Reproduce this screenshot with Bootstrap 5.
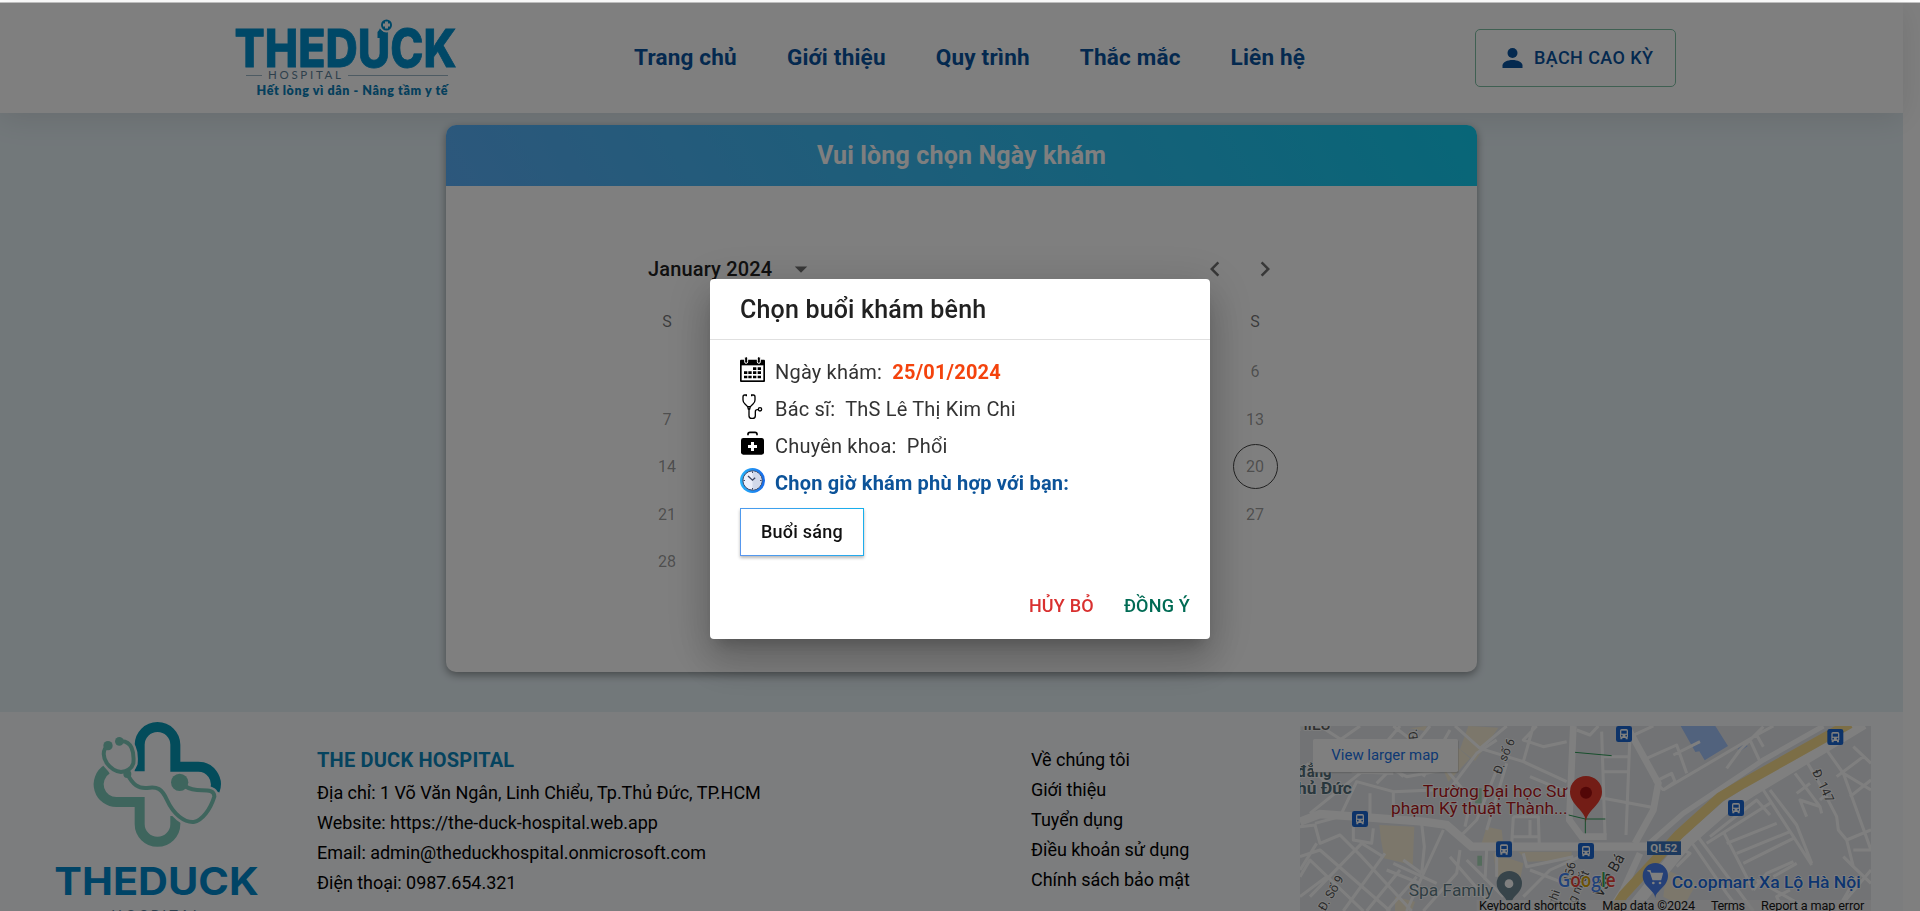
<!DOCTYPE html>
<html lang="vi">
<head>
<meta charset="utf-8">
<meta name="viewport" content="width=device-width, initial-scale=1">
<title>The Duck Hospital</title>
<link rel="stylesheet" href="https://cdn.jsdelivr.net/npm/bootstrap@5.3.0/dist/css/bootstrap.min.css">
<style>
  html, body { height: 911px; overflow: hidden; }
  body { font-family: Roboto, "Liberation Sans", sans-serif; background: #fff; color: #212121; }
  .top-edge { height: 3px; border-bottom: 1px solid #c4c4c4; }
  .page { width: 1903px; height: 908px; }
  .site-header { height: 110px; padding: 0 227px 0 235px; background: #fff; box-shadow: 0 5px 30px rgba(0,0,0,.1); position: relative; }
  .site-nav { margin-left: 174px; gap: 50px; padding-bottom: 1px; }
  .site-nav a { font-size: 22.5px; font-weight: 700; letter-spacing: .2px; color: #08529e; text-decoration: none; white-space: nowrap; }
  .user-btn { width: 201px; height: 58px; border: 1px solid #7fc0a5; border-radius: 5px; color: #08529e; font-size: 18px; font-weight: 500; letter-spacing: .4px; padding: 0 0 1px 23px; }
  .content { height: 599px; background: #e5f0f5; padding: 12px 0 0 446px; }
  .booking { position: relative; width: 1031px; height: 547px; border: 0; border-radius: 10px; box-shadow: 0 3px 8px rgba(0,0,0,.4); overflow: hidden; }
  .booking-head { height: 61px; font-size: 25px; font-weight: 700; letter-spacing: .15px; color: #fff; line-height: 61px; background: linear-gradient(60deg, #5aaff8, #10cdf0); }
  .cal { margin: 62px 172px 0; width: 687px; }
  .cal-bar { height: 42px; padding: 0 25px 0 30px; font-size: 20px; font-weight: 500; letter-spacing: .15px; }
  .cal-grid { display: grid; grid-template-columns: repeat(7, 98px); font-size: 16px; text-align: center; color: rgba(0,0,0,.4); letter-spacing: -.1px; }
  .cal-grid .dow { height: 58px; padding-top: 20px; color: rgba(0,0,0,.55); }
  .cal-grid .day { height: 47.5px; line-height: 47px; }
  .today { display: inline-block; width: 45px; height: 45px; line-height: 43px; border: 1px solid #444; border-radius: 50%; }
  .site-footer { height: 199px; background: #f8fafd; display: grid; grid-template-columns: 317px 714px 269px 571px; }
  .foot-text { font-size: 18px; line-height: 30px; color: #000; padding-top: 33px; white-space: nowrap; letter-spacing: -.03px; }
  .foot-text h2 { font-size: 20px; font-weight: 700; line-height: 30px; color: #0b87bd; margin: 0 0 3px; letter-spacing: .2px; }
  .modal-backdrop { top: 3px; height: 908px; }
  .slot-modal .modal-dialog { width: 500px; max-width: 500px; margin: 279px 0 0 710px; transform: none; }
  .slot-modal .modal-content { height: 360px; border: 0; border-radius: 4px; color: #333; box-shadow: 0 11px 15px -7px rgba(0,0,0,.2), 0 24px 38px 3px rgba(0,0,0,.14), 0 9px 46px 8px rgba(0,0,0,.12); }
  .slot-modal .modal-header { height: 61px; padding: 1px 30px 0; border-bottom: 1px solid #e0e0e0; }
  .slot-modal .modal-title { font-size: 25px; font-weight: 500; color: #212121; letter-spacing: .18px; }
  .slot-modal .modal-body { padding: 14px 30px 0; }
  .info { height: 37px; line-height: 37px; font-size: 20px; letter-spacing: .19px; white-space: nowrap; }
  .info svg { margin: 3px 10px 0 0; flex: none; }
  .date { color: #f4430d; font-weight: 700; letter-spacing: .2px; }
  .pick { color: #0c5399; font-weight: 700; letter-spacing: .19px; }
  .slot-btn { width: 124px; height: 48px; margin-top: 6px; padding: 0 0 2px; border: 1px solid; border-image: linear-gradient(60deg, #5a96ee, #14b0ec) 1; border-radius: 0; font-size: 18px; font-weight: 500; letter-spacing: .25px; color: #111; background: #fff; box-shadow: 0 2px 3px rgba(0,0,0,.28); }
  .slot-modal .modal-footer { border: 0; padding: 0 20px 15px; gap: 30px; }
  .text-action { font-size: 18px; font-weight: 500; letter-spacing: .2px; line-height: 36px; margin: 0; padding: 0; border: 0; background: none; }
</style>
</head>
<body>
<div class="top-edge"></div>
<div class="page">
  <header class="site-header d-flex align-items-center">
    <svg width="225" height="90" viewBox="235 13 225 90" aria-label="The Duck Hospital">
      <g fill="#0090cf" stroke="#0090cf">
        <text x="234.500" y="67" font-family="Inter" font-weight="800" font-size="52" textLength="222" lengthAdjust="spacingAndGlyphs" stroke-width=".8">THEDUCK</text>
        <circle cx="386.500" cy="25" r="7.500" fill="#fff" stroke="none"/>
        <circle cx="386.500" cy="25" r="5.500" stroke="none"/>
        <path d="M386.500 21.500v7M383 25h7" stroke="#fff" stroke-width="3"/>
        <path d="M377.500 32l2.500-3 4.500 4v5h-7z" stroke="none"/>
      </g>
      <path d="M246 75.500h16M348 75.500h100" stroke="#9db6c6" stroke-width="1"/>
      <text x="268" y="79.300" font-family="Lato" font-size="11.500" fill="#5d8199" textLength="73">HOSPITAL</text>
      <text x="256.500" y="95" font-family="Lato" font-weight="800" font-size="12.500" fill="#0a7fb8" textLength="191">Hết lòng vì dân - Nâng tầm y tế</text>
    </svg>
    <nav class="site-nav d-flex">
      <a href="#">Trang chủ</a><a href="#">Giới thiệu</a><a href="#">Quy trình</a><a href="#">Thắc mắc</a><a href="#">Liên hệ</a>
    </nav>
    <button class="user-btn btn d-flex align-items-center ms-auto" type="button">
      <svg width="27" height="30" viewBox="0 0 27 30" fill="#08529e"><circle cx="13.500" cy="10" r="5"/><path d="M3.500 25v-2.500c0-3.300 5-5.500 10-5.500s10 2.200 10 5.500V25z"/></svg>
      <span class="ms-2 text-nowrap">BẠCH CAO KỲ</span>
    </button>
  </header>

  <main class="content">
    <section class="booking card">
      <div class="booking-head text-center">Vui lòng chọn Ngày khám</div>
      <div class="cal">
        <div class="cal-bar d-flex align-items-center">
          <span>January 2024</span>
          <svg width="30" height="30" viewBox="0 0 24 24" fill="#707070" style="margin-left:14px"><path d="M7 10l5 5 5-5z"/></svg>
          <svg class="ms-auto" width="30" height="30" viewBox="0 0 24 24" fill="#707070"><path d="M15.410 7.410L14 6l-6 6 6 6 1.410-1.410L10.830 12z"/></svg>
          <svg width="30" height="30" viewBox="0 0 24 24" fill="#707070" style="margin-left:20px"><path d="M10 6L8.590 7.410 13.170 12l-4.580 4.590L10 18l6-6z"/></svg>
        </div>
        <div class="cal-grid">
          <div class="dow">S</div><div></div><div></div><div></div><div></div><div></div><div class="dow">S</div>
          <div class="day"></div><div></div><div></div><div></div><div></div><div></div><div class="day">6</div>
          <div class="day">7</div><div></div><div></div><div></div><div></div><div></div><div class="day">13</div>
          <div class="day">14</div><div></div><div></div><div></div><div></div><div></div><div class="day"><span class="today">20</span></div>
          <div class="day">21</div><div></div><div></div><div></div><div></div><div></div><div class="day">27</div>
          <div class="day">28</div>
        </div>
      </div>
    </section>
  </main>

  <footer class="site-footer">
    <div class="ps-5">
      <svg width="210" height="199" viewBox="143 66 630 597" fill="none">
        <g stroke-width="30">
          <path d="M418 244V164.500a53.500 53.500 0 0 1 107 0V230H592a53 53 0 0 1 51 72" stroke="#0699b6"/>
          <path d="M320 238A53 53 0 0 0 350 336H418V402a53.500 53.500 0 0 0 107 0V378" stroke="#7dcabb"/>
        </g>
        <path d="M323 167C304 180 309 205 320 220Q337 243 362 246Q392 242 399 220C402 190 396 148 357 154M380 250C398 286 415 296 440 294C470 288 485 296 500 330C520 374 553 398 580 396C606 392 630 358 642 320C643 296 612 302 590 300S555 292 538 278" stroke="#f8fafd" stroke-width="26"/>
        <path d="M323 167C304 180 309 205 320 220Q337 243 362 246Q392 242 399 220C402 190 396 148 357 154M380 250C398 286 415 296 440 294C470 288 485 296 500 330C520 374 553 398 580 396C606 392 630 358 642 320C643 296 612 302 590 300S555 292 538 278" stroke="#7dcabb" stroke-width="12"/>
        <g fill="#7dcabb"><circle cx="323" cy="167" r="14"/><circle cx="357" cy="154" r="13"/><circle cx="381" cy="252" r="12"/><circle cx="538" cy="277" r="26"/></g>
        <text x="162" y="615" font-family="Inter" font-weight="700" font-size="113" fill="#0088cc" textLength="613" lengthAdjust="spacingAndGlyphs">THEDUCK</text>
        <text x="333" y="690" font-family="Lato" font-size="42" fill="#5d8199" textLength="266">HOSPITAL</text>
      </svg>
    </div>
    <div class="foot-text">
      <h2>THE DUCK HOSPITAL</h2>
      <div>Địa chỉ: 1 Võ Văn Ngân, Linh Chiểu, Tp.Thủ Đức, TP.HCM</div>
      <div>Website: https://the-duck-hospital.web.app</div>
      <div>Email: admin@theduckhospital.onmicrosoft.com</div>
      <div>Điện thoại: 0987.654.321</div>
    </div>
    <div class="foot-text">
      <div>Về chúng tôi</div><div>Giới thiệu</div><div>Tuyển dụng</div><div>Điều khoản sử dụng</div><div>Chính sách bảo mật</div>
    </div>
    <div style="padding-top:14px">
      <svg class="d-block" width="571" height="185" viewBox="30 48 1713 555" font-family="Roboto">
        <defs>
          <g id="bus"><rect width="48" height="48" rx="7" fill="#1a67d2"/><rect x="12" y="9" width="24" height="27" rx="5" fill="#fff"/><rect x="16" y="14" width="16" height="9" fill="#1a67d2"/><circle cx="17.500" cy="29" r="2.500" fill="#1a67d2"/><circle cx="30.500" cy="29" r="2.500" fill="#1a67d2"/><path d="M13 34h6v6h-6zM29 34h6v6h-6z" fill="#fff"/></g>
        </defs>
        <rect x="30" y="48" width="1713" height="555" fill="#e5e7ea"/>
        <!-- built-up areas -->
        <g fill="#f8efd6">
          <path d="M268 345l105 5-5 115-85-20-10-55zM590 350l45 10 5 45-65-5zM535 48l90 5-70 100-45-35zM440 130l60-20 40 35-65 70zM685 425h160v25l-130 5zM610 430l90 30-10 50-70-10zM360 55l50-7-5 15zM315 560l60 15-10 28h-50zM1130 480l90 40-40 70-60-30z"/>
        </g>
        <path d="M1172 48h104l38 60-70 43-16-27-12 2zM1343 117l22-17 8 8-24 17z" fill="#a3c4fb"/>
        <path d="M560 235h15v45h-20zM562 437h14v30h-14z" fill="#a9d8b8"/>
        <!-- side streets -->
        <g fill="none" stroke="#fff" stroke-width="9" stroke-linejoin="round">
          <path d="M30 200L150 90 210 48M60 310L210 190 330 48M130 240L50 160M150 320L200 215 310 245 430 240M250 150L350 200 460 180M90 48L170 100 250 110M310 48L390 110 470 180 520 240M420 48L370 110 260 220M260 130l80 70M480 60L400 200M470 250L560 130 620 90M240 250V320M310 245V325M185 185L310 190"/>
          <path d="M495 48L570 115 700 155 830 215M570 115L650 48M700 155L730 48M620 180L560 330 510 380M650 160L590 360M740 48L700 90 760 110 830 95M720 200L840 250M670 320L665 405M670 320H745L748 410M670 380H745M720 330V380M545 260L525 350"/>
          <path d="M395 340L403 410 395 490M460 360L405 480 350 603M310 460L440 520M290 480L390 520M395 490L340 450M190 345L190 390 245 400 250 355"/>
          <path d="M30 350L75 345 90 400 150 375 215 440 365 603M30 440L90 420 300 603M30 500L60 450 220 603M80 400L30 480M60 560L215 400 280 440M160 603L285 430M230 603L330 480M290 603L380 500M30 560L110 500M75 340L150 320M400 603L500 490 510 420M480 440L620 603M530 450L640 560M590 420L585 510M620 425V500M700 430L710 470 850 440M720 480L850 530M700 560L780 480 870 440"/>
          <path d="M935 65L945 375M1020 75L1008 375M860 250L1085 292M935 140H1015M940 185H1012M925 48L900 75 860 60"/>
          <path d="M1070 145L1160 105 1190 190M1120 240L1095 215 1145 190 1155 215 1120 240M1120 240L1400 75 1450 48M1010 85L1090 48M1230 95L1150 135M1310 175L1350 120 1420 50M1380 90L1410 155M1400 75L1420 110"/>
          <path d="M1420 240L1565 465M1440 240L1520 345 1565 460M1250 400L1440 280M1260 380L1400 270 1440 315M1300 365L1390 540M1310 400L1460 340M1340 430L1500 365M1360 460L1510 385M1200 390L1310 550 1350 603M1220 375L1390 603M1140 400L1200 430 1160 470M1390 540L1430 490 1510 455M1400 510L1560 600M1450 500L1520 460"/>
          <path d="M1515 190L1590 290 1595 310M1550 155L1580 205 1640 320 1645 360 1670 390 1690 470 1743 520M1610 120L1660 190 1743 420M1640 200L1720 140M1520 250L1560 220M1590 290L1530 270 1550 320M1670 390L1743 360M1680 260L1743 210M1660 190L1743 240M1690 470L1660 440M1690 420L1743 420M1620 240L1590 270M1690 110L1743 160M1480 603L1460 560 1500 540M1700 500L1640 603M1743 480L1650 590"/>
        </g>
        <g fill="none" stroke="#fff">
          <path d="M30 335L90 312 230 322 400 335 470 345 545 410H1100" stroke-width="25"/>
          <path d="M850 48L838 330 875 380H950M1010 48L1105 220 1090 300 1035 400M960 603L1000 540 1050 430" stroke-width="20"/>
          <path d="M1060 415L1180 310 1420 150 1600 48" stroke-width="15"/>
          <path d="M1720 40L1380 245 1310 290 1190 395 1020 603" stroke-width="36"/>
          <path d="M1680 40L1360 220 1290 262 1165 375 1000 555 965 610" stroke="#f8dc8d" stroke-width="30"/>
        </g>
        <path d="M855 127L965 137M836 315l50 12h60M886 325v45" stroke="#2e9c58" stroke-width="3" fill="none"/>
        <!-- places and transit -->
        <use href="#bus" x="186" y="303"/><use href="#bus" x="618" y="394"/><use href="#bus" x="864" y="399"/><use href="#bus" x="978" y="48"/><use href="#bus" x="1612" y="57"/><use href="#bus" x="1314" y="270"/>
        <path d="M888 338c0-38-48-52-48-93a48 47 0 0 1 96 0c0 41-48 55-48 93z" fill="#e63a2d"/><circle cx="888" cy="248" r="18" fill="#a50e0e"/>
        <path d="M620 520a38 37 0 0 1 76 0c0 25-20 33-30 52h-16c-10-19-30-27-30-52z" fill="#6f8995"/><circle cx="657" cy="521" r="13" fill="#fff"/>
        <path d="M1096 565c0-24-38-34-38-68a38 38 0 0 1 76 0c0 34-38 44-38 68z" fill="#4a80ee"/>
        <path d="M1072 482h8l9 27h23l5-19h-33" fill="#fff" stroke="#fff" stroke-width="4"/><circle cx="1090" cy="519" r="4" fill="#fff"/><circle cx="1110" cy="519" r="4" fill="#fff"/>
        <rect x="1071" y="394" width="102" height="41" fill="#3973bd"/>
        <text x="1081" y="427" font-size="34" font-weight="700" fill="#fff" textLength="81">QL52</text>
        <g paint-order="stroke" stroke="#fff" stroke-width="5" stroke-linejoin="round">
          <g fill="#b3171b" font-size="51"><text x="398" y="260" textLength="434" lengthAdjust="spacingAndGlyphs">Trường Đại học Sư</text><text x="303" y="312" textLength="530" lengthAdjust="spacingAndGlyphs">phạm Kỹ thuật Thành...</text></g>
          <g fill="#536f7a" font-size="49" font-weight="700"><text x="22" y="200" textLength="103" lengthAdjust="spacingAndGlyphs">đẳng</text><text x="21" y="253" textLength="164" lengthAdjust="spacingAndGlyphs">hủ Đức</text></g>
          <text x="20" y="61" font-size="42" font-weight="500" fill="#606060" textLength="102" lengthAdjust="spacingAndGlyphs">HIẾU</text>
          <text x="356" y="557" font-size="50" fill="#617c87" textLength="254" lengthAdjust="spacingAndGlyphs">Spa Family</text>
          <text x="1145" y="533" font-size="50" font-weight="500" fill="#1a6be0" textLength="567" lengthAdjust="spacingAndGlyphs">Co.opmart Xa Lộ Hà Nội</text>
          <g fill="#555" font-size="37">
            <text transform="translate(632 195) rotate(-67)" textLength="112">Đ. số 6</text>
            <text transform="translate(383 88) rotate(-95)">Đ. </text>
            <text transform="translate(105 605) rotate(-60)">Đ. Số 9</text>
            <text transform="translate(1566 185) rotate(65)">Đ. 147</text>
            <text transform="translate(794 592) rotate(-70)">ghi</text>
            <text transform="translate(845 520) rotate(-78)">156</text>
            <text transform="translate(846 600) rotate(-65)">ng nhất</text>
            <text transform="translate(935 565) rotate(-60)" font-size="45" fill="#444">Văn Bá</text>
          </g>
        </g>
        <rect x="560" y="570" width="1183" height="35" fill="#f3f3f3" opacity=".72"/>
        <text x="803" y="532" font-family="Open Sans" font-size="57" font-weight="600" stroke="#fff" stroke-width="4" paint-order="stroke" textLength="174" lengthAdjust="spacingAndGlyphs"><tspan fill="#4285f4">G</tspan><tspan fill="#ea4335">o</tspan><tspan fill="#d9a404">o</tspan><tspan fill="#4285f4">g</tspan><tspan fill="#34a853">l</tspan><tspan fill="#ea4335">e</tspan></text>
        <g font-size="38" fill="#161616"><text x="567" y="600" textLength="322">Keyboard shortcuts</text><text x="937" y="600" textLength="278">Map data ©2024</text><text x="1263" y="600" textLength="102">Terms</text><text x="1413" y="600" textLength="310">Report a map error</text></g>
        <rect x="70" y="90" width="436" height="100" rx="5" fill="#aaa" opacity=".5"/>
        <rect x="69" y="87" width="435" height="99" rx="5" fill="#fff"/>
        <text x="124" y="150" font-size="45" fill="#1a73e8" textLength="322" lengthAdjust="spacingAndGlyphs">View larger map</text>
      </svg>
    </div>
  </footer>
</div>

<div class="modal-backdrop show"></div>
<div class="modal slot-modal show d-block" tabindex="-1" role="dialog">
  <div class="modal-dialog">
    <div class="modal-content">
      <div class="modal-header"><h1 class="modal-title">Chọn buổi khám bênh</h1></div>
      <div class="modal-body">
        <div class="info d-flex align-items-start">
          <svg width="25" height="25" viewBox="0 0 75 75"><path d="M3 8h69q3 0 3 3v61q0 3-3 3H3q-3 0-3-3V11q0-3 3-3z"/><path d="M5 25h65v45H5z" fill="#fff"/><g stroke="#fff" stroke-width="3"><rect x="14" y="-1" width="9" height="20" rx="4.500"/><rect x="52" y="-1" width="9" height="20" rx="4.500"/></g><path d="M39 31h10v8H39zM53 31h10v8H53zM12 43h10v8H12zM25 43h10v8H25zM39 43h10v8H39zM53 43h10v8H53zM12 56h10v8H12zM25 56h10v8H25zM39 56h10v8H39zM53 56h10v8H53z"/></svg>
          <span>Ngày khám:&nbsp; <span class="date">25/01/2024</span></span>
        </div>
        <div class="info d-flex align-items-start">
          <svg width="25" height="25" viewBox="0 0 75 75" fill="none" stroke="#000" stroke-width="4"><path d="M18 3h-4q-5 0-5 6v9q0 7 6 12l8 8h8l8-8q6-5 6-12V9q0-6-5-6h-4M19 1v6M35 1v6M23 38l2 7h4l2-7M27 45v20q0 8 8 8h3q8 0 8-8V53q0-6 6-6h3"/><circle cx="60" cy="46" r="5"/></svg>
          <span>Bác sĩ:&nbsp; ThS Lê Thị Kim Chi</span>
        </div>
        <div class="info d-flex align-items-start">
          <svg width="25" height="25" viewBox="0 0 75 75"><path d="M24 13V9q0-5 6-5h15q6 0 6 5v4" fill="none" stroke="#000" stroke-width="5"/><rect x="3" y="21" width="69" height="50" rx="7"/><path d="M33 33h9v9h9v9h-9v9h-9v-9h-9v-9h9z" fill="#fff"/></svg>
          <span>Chuyên khoa:&nbsp; Phổi</span>
        </div>
        <div class="info d-flex align-items-start">
          <svg width="25" height="25" viewBox="0 0 75 75"><defs><linearGradient id="rim"><stop stop-color="#28b4fb"/><stop offset="1" stop-color="#1769e8"/></linearGradient></defs><circle cx="37.500" cy="37.500" r="37.500" fill="url(#rim)"/><circle cx="37.500" cy="37.500" r="29" fill="#eceffb" stroke="#424b66" stroke-width="3"/><path d="M37.500 10a27.500 27.500 0 0 1 0 55z" fill="#d2d9ea"/><path d="M37.500 10v5M37.500 60v5M10 37.500h5M60 37.500h5" stroke="#424b66" stroke-width="3"/><path d="M24 24l13.500 12.500 8-7" fill="none" stroke="#3c4560" stroke-width="4"/></svg>
          <span class="pick">Chọn giờ khám phù hợp với bạn:</span>
        </div>
        <button class="btn slot-btn d-block" type="button">Buổi sáng</button>
      </div>
      <div class="modal-footer">
        <button class="text-action" type="button" style="color:#d9302f">HỦY BỎ</button>
        <button class="text-action" type="button" style="color:#006b54">ĐỒNG Ý</button>
      </div>
    </div>
  </div>
</div>
<script src="https://cdn.jsdelivr.net/npm/bootstrap@5.3.0/dist/js/bootstrap.bundle.min.js"></script>
</body>
</html>
